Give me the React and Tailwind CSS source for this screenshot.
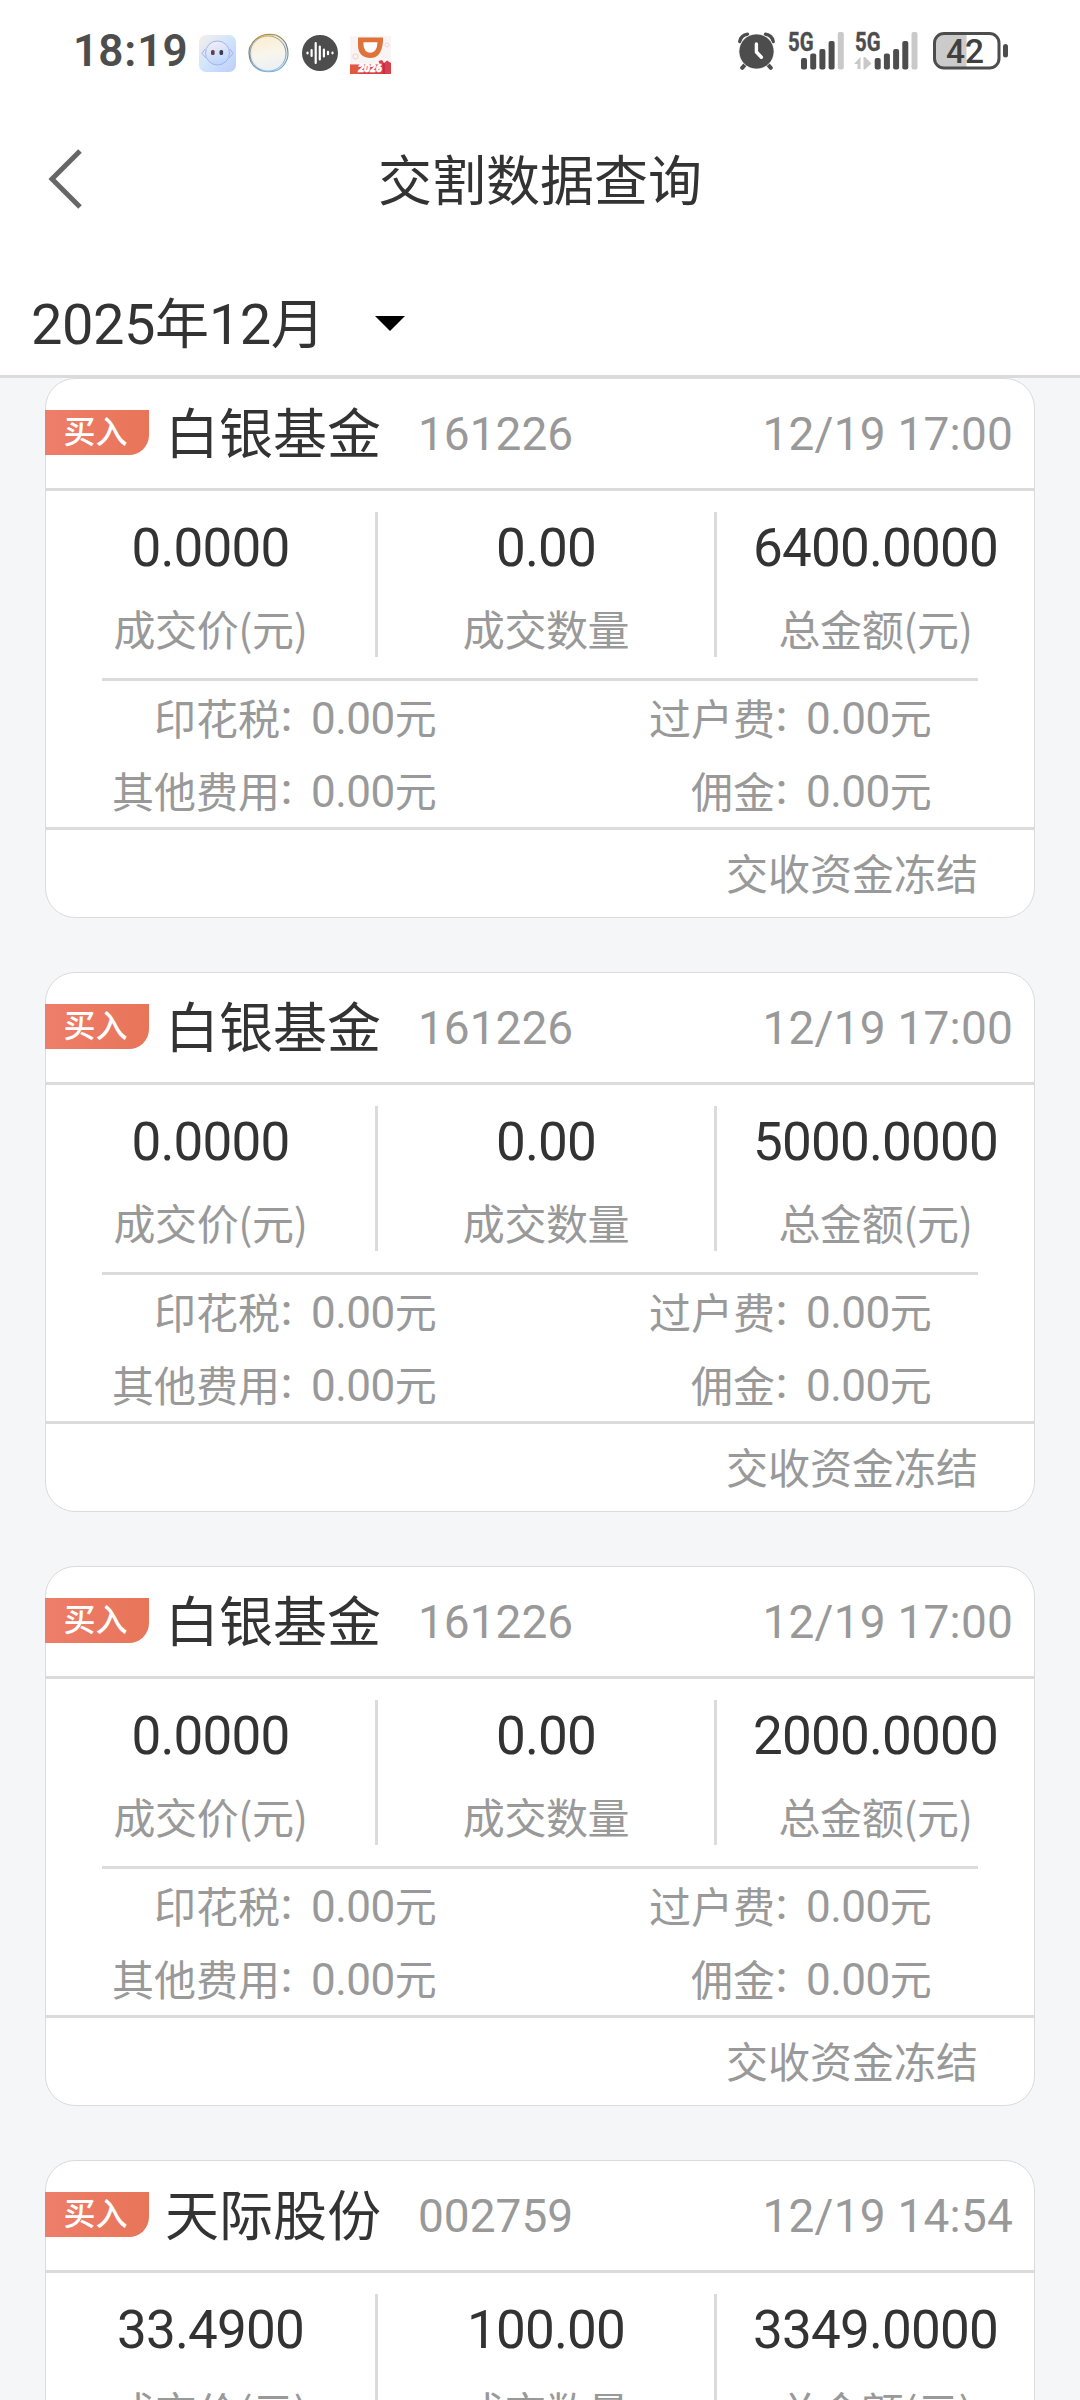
import { clsx } from 'clsx';

const records = [
  { id: 1, nome: '白银基金', code: '161226', time: '12/19 17:00', price: '0.0000', count: '0.00', total: '6400.0000' },
  { id: 2, nome: '白银基金', code: '161226', time: '12/19 17:00', price: '0.0000', count: '0.00', total: '5000.0000' },
  { id: 3, nome: '白银基金', code: '161226', time: '12/19 17:00', price: '0.0000', count: '0.00', total: '2000.0000' },
  { id: 4, nome: '天际股份', code: '002759', time: '12/19 14:54', price: '33.4900', count: '100.00', total: '3349.0000' }
];

const signalBars = [
  { x: 0, h: 11.5 },
  { x: 9.2, h: 16 },
  { x: 18.4, h: 20.5 },
  { x: 27.6, h: 28.5 },
  { x: 36.8, h: 37.5 }
];

function Num({ className, children }) {
  return <span className={clsx("font-['Roboto',sans-serif]", className)}>{children}</span>;
}

function AssistantIcon() {
  return (
    <svg width="37" height="37" viewBox="0 0 37 37">
      <defs>
        <linearGradient id="robotBg" x1="0" y1="0" x2="1" y2="1">
          <stop offset="0" stopColor="#f7eee6" />
          <stop offset="0.45" stopColor="#d3e6fb" />
          <stop offset="1" stopColor="#bccdfa" />
        </linearGradient>
        <linearGradient id="robotFace" x1="0" y1="0" x2="0.3" y2="1">
          <stop offset="0" stopColor="#f9f1f6" />
          <stop offset="1" stopColor="#bfd6fd" />
        </linearGradient>
      </defs>
      <rect width="37" height="37" rx="7" fill="url(#robotBg)" />
      <path d="M6 14 L3 18.5 L7 23 M31 14 L34 18.5 L30 23" fill="none" stroke="#9fb1e6" strokeWidth="1" />
      <circle cx="18.5" cy="18" r="12" fill="url(#robotFace)" stroke="#a3b4ea" strokeWidth="1" />
      <rect x="12" y="15" width="3.6" height="5" rx="1.5" fill="#5b4444" />
      <rect x="20.5" y="15" width="3.6" height="5" rx="1.5" fill="#3d3a4c" />
    </svg>
  );
}

function BubbleIcon() {
  return (
    <svg width="41" height="40" viewBox="0 0 41 40">
      <defs>
        <linearGradient id="bubbleFill" x1="0.4" y1="0" x2="0.6" y2="1">
          <stop offset="0" stopColor="#fbeed0" />
          <stop offset="0.5" stopColor="#f9f5ec" />
          <stop offset="1" stopColor="#eaf0f5" />
        </linearGradient>
        <linearGradient id="bubbleRing" x1="0.4" y1="0" x2="0.6" y2="1">
          <stop offset="0" stopColor="#b8913a" />
          <stop offset="0.4" stopColor="#6f7b80" />
          <stop offset="1" stopColor="#7fb2e0" />
        </linearGradient>
      </defs>
      <path d="M14 2.5 Q20 0.5 28 2 Q35 5 38 11 Q41 18 39.5 25 Q37 33 30 37 Q22 40 14 38 Q6 35 3 29 Q0 22 1.5 15 Q5 6 14 2.5 Z" fill="#e6ecec" stroke="url(#bubbleRing)" strokeWidth="1.1" />
      <ellipse cx="20" cy="20.5" rx="18" ry="17.6" fill="none" stroke="url(#bubbleRing)" strokeWidth="0.8" />
      <circle cx="20.5" cy="20.5" r="16.5" fill="url(#bubbleFill)" />
    </svg>
  );
}

function VoiceIcon() {
  return (
    <svg width="36" height="36" viewBox="0 0 36 36">
      <circle cx="18" cy="18" r="18" fill="#4d4d4d" />
      <g stroke="#fff" strokeWidth="2.2" strokeLinecap="round">
        <path d="M5.5 17.6 V18.4 M9.6 15 V21 M13.7 8 V28 M17.8 11.5 V24.5 M21.9 14.5 V21.5 M26 16.8 V19.2 M30.5 17.7 V18.3" />
      </g>
    </svg>
  );
}

function TaxiIcon() {
  return (
    <svg width="41" height="38" viewBox="0 0 41 38">
      <rect width="41" height="38" fill="#f9f5f5" />
      <path d="M8 1.5 H33 V5.5 Q31.5 22 20.5 22 Q8 21.5 8 9 Z" fill="#e0733a" />
      <path d="M13.5 6.3 H27.5 Q27 16.5 20.5 16.8 Q14 16.5 13.5 9 Z" fill="#fff" />
      <circle cx="5.5" cy="20.5" r="2.6" fill="none" stroke="#f3cccc" />
      <circle cx="37" cy="9" r="2" fill="none" stroke="#f3d6d6" />
      <path d="M0 28.5 H30 L28.5 25 L32 24 L34 27 L37 24.5 L41 27 V38 H0 Z" fill="#da3f4c" />
      <path d="M0 29 H9 V38 H0 Z" fill="#e2583e" />
      <path d="M34 27 V38" stroke="#b92c4c" strokeWidth="1.6" />
      <text x="20" y="35.5" textAnchor="middle" fill="#fff" stroke="#fff" strokeWidth="0.6" className="font-['Roboto',sans-serif] text-[10.5px] font-black italic">2026</text>
    </svg>
  );
}

function AlarmIcon() {
  return (
    <svg width="37" height="38" viewBox="0 0 37 38">
      <g fill="none" stroke="#4d4d4d" strokeLinecap="round">
        <path d="M1.8 9.5 A 9 9 0 0 1 9.5 2.3" strokeWidth="3.4" />
        <path d="M35.2 9.5 A 9 9 0 0 0 27.5 2.3" strokeWidth="3.4" />
        <path d="M8.5 31 L4.2 35.8 M28.5 31 L32.8 35.8" strokeWidth="4" />
      </g>
      <circle cx="18.5" cy="19.5" r="17.6" fill="#4d4d4d" stroke="#fff" strokeWidth="0.8" />
      <path d="M18.4 12 V20 L23.4 25.2" fill="none" stroke="#fff" strokeWidth="3.4" strokeLinecap="round" strokeLinejoin="round" />
    </svg>
  );
}

function SignalIcon({ offset, arrows, width }) {
  return (
    <svg width={width} height="38" viewBox={`0 0 ${width} 38`} className="overflow-visible">
      <text x="0" y="18.5" fill="#4d4d4d" stroke="#4d4d4d" strokeWidth="0.4" textLength="25.5" lengthAdjust="spacingAndGlyphs" className="font-['Roboto',sans-serif] text-[25px] font-bold">5G</text>
      {arrows && (
        <path d="M-1 32 L5.5 25 V37 H2.5 V32 Z M8.5 25 H10 L16.5 31.5 L10 37.5 H8.5 Z" fill="#c9c9c9" />
      )}
      {signalBars.map((bar, i) => (
        <rect key={bar.x} x={offset + bar.x} y={37.5 - bar.h} width="6" height={bar.h} rx="2" fill={i === 4 ? '#c9c9c9' : '#4d4d4d'} />
      ))}
    </svg>
  );
}

function BatteryIcon() {
  return (
    <svg width="76" height="38" viewBox="0 0 76 38">
      <path d="M11 2 H33.5 V36 H11 A9 9 0 0 1 2 27 V11 A9 9 0 0 1 11 2 Z" fill="#cbcbcb" />
      <rect x="1.5" y="1.5" width="64.5" height="34.5" rx="9.5" fill="none" stroke="#4d4d4d" strokeWidth="3" />
      <rect x="70" y="12" width="5" height="13.5" rx="2.5" fill="#4d4d4d" />
      <text x="32" y="30.5" textAnchor="middle" fill="#404040" textLength="38" lengthAdjust="spacingAndGlyphs" className="font-['Roboto',sans-serif] text-[34px] font-medium">42</text>
    </svg>
  );
}

function StatusBar() {
  return (
    <div className="flex h-[104px] items-start pt-8 pl-[73px] pr-[71px]">
      <Num className="w-[126px] text-[44px] leading-[38px] font-semibold text-[#4d4d4d]">
        18<span className="px-px">:</span>19
      </Num>
      <div className="flex items-center">
        <AssistantIcon />
        <div className="ml-3"><BubbleIcon /></div>
        <div className="ml-[13px]"><VoiceIcon /></div>
        <div className="ml-3 pt-1"><TaxiIcon /></div>
      </div>
      <div className="ml-auto flex items-start">
        <AlarmIcon />
        <div className="ml-[13px]"><SignalIcon width={57} offset={13} /></div>
        <div className="ml-[10px]"><SignalIcon width={63} offset={19.7} arrows /></div>
        <div className="ml-[15px]"><BatteryIcon /></div>
      </div>
    </div>
  );
}

function Stat({ value, label }) {
  return (
    <div className="flex flex-1 flex-col items-center">
      <Num className="mt-[11px] h-[50px] text-[53px] leading-[50px] tracking-[-0.8px] text-[#333]">{value}</Num>
      <span className="mt-[30px] text-[42px] leading-[50px] tracking-[-0.4px] text-[#999]">{label}</span>
    </div>
  );
}

function Fee({ label }) {
  return (
    <div className="flex h-[73px] items-center pb-px text-[42px] leading-[60px] text-[#999]">
      <div className="flex w-[246px] justify-end">
        {label}
        <Num className="pl-px font-medium">:</Num>
      </div>
      <div className="ml-[19px]">
        <Num className="text-[44px] tracking-[-0.5px]">0.00</Num>元
      </div>
    </div>
  );
}

function RecordCard({ record }) {
  return (
    <div className="h-[540px] w-[990px] shrink-0 rounded-[30px] border border-[#dbdbdb] bg-white">
      {/* Cabeçalho */}
      <div className="flex h-[109px] items-center pr-[21px]">
        <div className="-ml-px mb-[2px] flex h-[45px] w-[104px] items-center justify-center rounded-br-[20px] bg-gradient-to-r from-[#ee7d6a] to-[#e87558] pr-[3px] pb-[6px] text-[32px] leading-[39px] font-medium text-white">
          买入
        </div>
        <span className="ml-4 pb-[5px] text-[54px] leading-[60px] text-[#333]">{record.nome}</span>
        <Num className="ml-[37px] pt-px text-[46px] text-[#999]">{record.code}</Num>
        <Num className="ml-auto pt-px text-[46px] tracking-[0.2px] text-[#999]">{record.time}</Num>
      </div>
      <div className="h-[3px] bg-[#dbdbdb]" />

      {/* Valores */}
      <div className="flex h-[187px] py-[21px]">
        <div className="flex w-[329px]">
          <Stat value={record.price} label="成交价(元)" />
        </div>
        <div className="w-[3px] bg-[#dbdbdb]" />
        <div className="flex w-[336px]">
          <Stat value={record.count} label="成交数量" />
        </div>
        <div className="w-[3px] bg-[#dbdbdb]" />
        <div className="flex flex-1">
          <Stat value={record.total} label="总金额(元)" />
        </div>
      </div>
      <div className="mx-14 h-[3px] bg-[#dbdbdb]" />

      {/* Taxas */}
      <div className="grid grid-cols-[495px_1fr]">
        <Fee label="印花税" />
        <Fee label="过户费" />
        <Fee label="其他费用" />
        <Fee label="佣金" />
      </div>
      <div className="h-[3px] bg-[#dbdbdb]" />

      <div className="flex h-[87px] items-center justify-end pr-14 pb-[3px] text-[42px] leading-[60px] text-[#999]">
        交收资金冻结
      </div>
    </div>
  );
}

export default function App() {
  return (
    <div className="flex h-[2400px] w-[1080px] flex-col overflow-hidden bg-[#f5f6f8] font-['Noto_Sans_CJK_SC',sans-serif]">
      <div className="h-[378px] shrink-0 border-b-[3px] border-[#dbdbdb] bg-white">
        <StatusBar />

        {/* Título */}
        <div className="flex h-[150px] items-center pl-12">
          <svg width="36" height="60" viewBox="0 0 36 60" fill="none" stroke="#666" strokeWidth="5">
            <path d="M32 2 L4 30 L32 58" />
          </svg>
          <h1 className="flex-1 pr-[84px] pb-[2px] text-center text-[54px] leading-[70px] text-[#333]">交割数据查询</h1>
        </div>

        {/* Mês */}
        <div className="flex h-[121px] items-center pt-4 pl-[31px] text-[54px] leading-[80px] text-[#333]">
          <div className="w-[344px]">
            <Num className="text-[56px] tracking-[-0.5px]">2025</Num>年
            <Num className="text-[56px] tracking-[-0.5px]">12</Num>月
          </div>
          <svg width="30" height="15" viewBox="0 0 30 15" className="mt-px">
            <path d="M0 0 H30 L15 15 Z" fill="#000" />
          </svg>
        </div>
      </div>

      <div className="flex flex-col items-center gap-[54px]">
        {records.map((record) => (
          <RecordCard key={record.id} record={record} />
        ))}
      </div>
    </div>
  );
}
